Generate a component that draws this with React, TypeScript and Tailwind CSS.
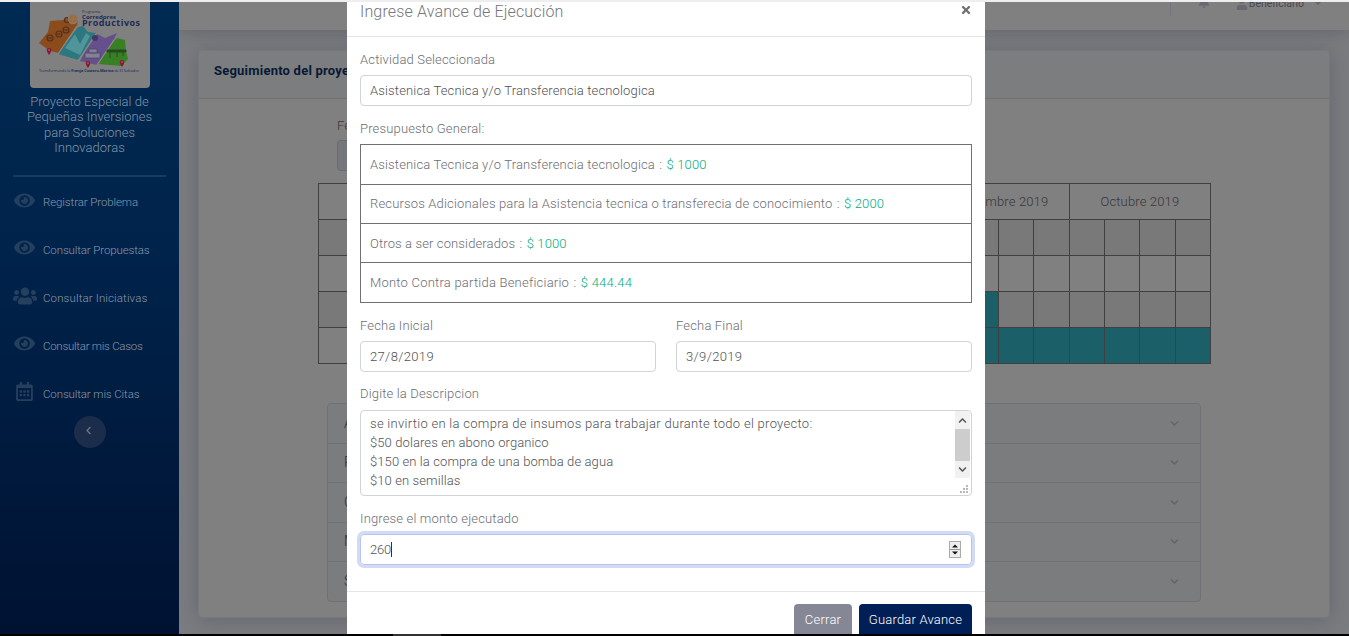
import React from 'react';
import { FaEye, FaUsers, FaRegCalendarAlt, FaBell, FaUser, FaCaretDown, FaChevronDown, FaChevronLeft, FaChevronUp, FaTimes } from 'react-icons/fa';

const menu = [
  { label: 'Registrar Problema', icon: FaEye, track: 'tracking-[-0.1px]' },
  { label: 'Consultar Propuestas', icon: FaEye, track: 'tracking-[-0.12px]' },
  { label: 'Consultar Iniciativas', icon: FaUsers, track: 'tracking-[0.12px]' },
  { label: 'Consultar mis Casos', icon: FaEye, track: 'tracking-[-0.27px]' },
  { label: 'Consultar mis Citas', icon: FaRegCalendarAlt, track: 'tracking-[-0.12px]' },
];

const budget = [
  { label: 'Asistenica Tecnica y/o Transferencia tecnologica', amount: '1000', size: 'h-[40px] tracking-[0.15px]' },
  { label: 'Recursos Adicionales para la Asistencia tecnica o transferecia de conocimiento', amount: '2000', size: 'h-[39px] tracking-[0.165px]' },
  { label: 'Otros a ser considerados', amount: '1000', size: 'h-[39px] pt-px tracking-[0.13px]' },
  { label: 'Monto Contra partida Beneficiario', amount: '444.44', size: 'h-[40px] tracking-[0.22px]' },
];

const months = ['', '', 'Septiembre 2019', 'Octubre 2019'];

const schedule = [
  { shaded: true, from: 16, to: 16 },
  { shaded: false, from: 16, to: 16 },
  { shaded: true, from: 8, to: 10 },
  { shaded: false, from: 8, to: 16 },
];

const panels = [
  'Asistenica Tecnica',
  'Recursos Adicionales',
  'Otros a ser considerados',
  'Monto Contra partida',
  'Seguimiento',
];

function Logo() {
  return (
    <svg className="h-[86px] w-[120px] rounded-b" viewBox="0 0 120 86">
      <rect width="120" height="86" fill="#808080" />
      <path d="M9 41 L18 30 L20 19 L33 18 L42 13 L48 17 L47 24 L29 51 L20 49 Z" fill="#8b4b1b" />
      <path d="M48 25 L53 24 L58 30 L66 31 L48 58 L28 52 Z" fill="#2d7780" />
      <path d="M67 32 L75 36 L87 31 L83 39 L67 63 L50 59 L56 48 Z" fill="#65508b" />
      <path d="M87 36 L95 38 L96 49 L98 57 L91 64 L68 62 L84 39 Z" fill="#398025" />
      <path d="M47 24 L28 52 M66 32 L48 59 M84 38 L67 63" stroke="#898989" strokeWidth="1.3" />
      <path d="M35 46 L45 32 L50 42 L56 31 L60 34 L50 53 Z" fill="#50959a" />
      <path d="M55 51h15v5H55zM59 47h8v4h-8z" fill="#858093" stroke="#4a466c" strokeWidth=".7" />
      <path d="M77 48h19v2H77zM80 50v6M87 50v5M93 50v4" fill="#244d21" stroke="#244d21" />
      <g fill="none" stroke="#54311f" strokeWidth="1.2">
        <circle cx="20" cy="36" r="3" /><circle cx="29" cy="32" r="3" /><circle cx="36" cy="28" r="3" /><circle cx="37" cy="18" r="2.5" />
      </g>
      <path d="M18 36h4M27 32h4M34 28h4" stroke="#54311f" />
      <circle cx="43" cy="17" r="4.5" fill="#a6672f" stroke="#87796c" strokeWidth="1.5" />
      <path d="M43 13v8M39 17h8" stroke="#87796c" />
      <circle cx="65" cy="36" r="3" fill="#483568" />
      <g fill="#8b1830">
        <path d="M19 53c-3-4-3-7 0-7s3 3 0 7M58 66c-3-4-3-7 0-7s3 3 0 7M92 65c-3-4-3-7 0-7s3 3 0 7" />
      </g>
      <g fill="#96858a"><circle cx="19" cy="48" r=".8" /><circle cx="58" cy="61" r=".8" /><circle cx="92" cy="60" r=".8" /></g>
      <g fill="#1d2d58" className="font-['Open_Sans',sans-serif]">
        <text x="52" y="11" fontSize="3.8" textLength="18">Programa</text>
        <text x="52" y="16.5" fontSize="6" fontWeight="700" textLength="34">Corredores</text>
        <text x="52" y="23.7" fontSize="9" fontWeight="700" textLength="58">Productivos</text>
        <text x="9" y="70" fontSize="3.9" textLength="100">Transformando la <tspan fontWeight="700">Franja Costero-Marina</tspan> de El Salvador</text>
      </g>
    </svg>
  );
}

function Sidebar() {
  return (
    <aside className="flex w-[179px] shrink-0 flex-col items-center bg-linear-to-b from-[#002a52] from-0% via-[#00234b] via-40% to-[#001232] to-100%">
      <Logo />
      <div className="mt-[6px] text-center text-[13px] leading-[15.3px] font-light tracking-[0.02px] text-[#8294a6]">
        Proyecto Especial de<br />Pequeñas Inversiones<br />para Soluciones<br />Innovadoras
      </div>
      <div className="mt-5 h-[2px] w-[153px] bg-[#173b61]" />
      <nav className="mt-[2px] flex w-full flex-col pl-[13px]">
        {menu.map(({ label, icon: Icon, track }) => (
          <a key={label} className={`flex h-[47.8px] items-center text-[11.5px] font-light text-[#8b99ab] ${track}`}>
            <span className="flex w-[30px] shrink-0 pb-[6px] text-[#25405f]">
              <Icon size={Icon === FaRegCalendarAlt ? 19 : Icon === FaUsers ? 24 : 21} className={Icon === FaUsers ? '' : Icon === FaEye ? 'ml-[1px]' : 'ml-[2px]'} />
            </span>
            <span className="whitespace-nowrap">{label}</span>
          </a>
        ))}
      </nav>
      <button className="mt-[-2px] flex size-8 items-center justify-center rounded-full bg-[#1b2d4b] pr-[2px] pb-1 text-[#687587]">
        <FaChevronLeft size={9} />
      </button>
    </aside>
  );
}

function Topbar() {
  return (
    <header className="flex h-7 shrink-0 justify-end overflow-hidden bg-[#808080] text-[#686872] shadow-[0_2px_16px_rgba(40,42,50,.28)]">
      <div className="h-[14px] w-px bg-[#74747a]" />
      <FaBell size={12} className="mt-[-6px] ml-[27px]" />
      <FaUser size={12} className="mt-[-4px] mr-px ml-[26px]" />
      <span className="mt-[-5px] h-4 text-[10.5px] leading-[14px] text-[#48484e]">Beneficiario</span>
      <FaCaretDown size={10} className="mt-[-4px] mr-[26px] ml-[9px]" />
    </header>
  );
}

function Schedule() {
  return (
    <div className="ml-[119px] w-[893px] border-t border-l border-[#404040] text-[13px] font-light text-[#36363b]">
      <div className="flex h-9">
        <div className="w-[327px] border-r border-b border-[#404040]" />
        {months.map((m, i) => (
          <div key={i} className="flex flex-1 items-center justify-center border-r border-b border-[#404040] tracking-[0.15px]">{m}</div>
        ))}
      </div>
      {schedule.map((row, i) => (
        <div key={i} className={row.shaded ? 'flex h-9 bg-[#797979]' : 'flex h-9'}>
          <div className="w-[327px] border-r border-b border-[#404040]" />
          {Array.from({ length: 16 }, (_, c) => (
            <div key={c} className={c >= row.from && c < row.to ? 'flex-1 border-r border-b border-[#404040] bg-[#1b6068]' : 'flex-1 border-r border-b border-[#404040]'} />
          ))}
        </div>
      ))}
    </div>
  );
}

function ProjectCard() {
  return (
    <section className="mx-[19px] mt-5 h-[568px] rounded-[4px] border border-[#77787b] bg-[#808080] shadow-[0_2px_20px_rgba(35,38,50,.25)]">
      <div className="flex h-12 items-center rounded-t-[3px] border-b border-[#707174] bg-[#7c7d7f] px-[15px] pb-[8px]">
        <h1 className="text-[13px] font-bold tracking-[0.22px] text-[#071936]">Seguimiento del proyecto</h1>
      </div>
      <div className="h-[84px] pt-[17px] pl-[138px] text-[13px] text-[#36363b]">
        <div className="h-[24px] leading-[19px] font-light">Fecha de inicio</div>
        <div className="h-[31px] w-[300px] rounded border border-[#6b6b72] bg-[#76767d]" />
      </div>
      <Schedule />
      <div className="mt-[39px] ml-[128px] w-[874px] rounded border border-[#707174] bg-[#7b7c7e]">
        {panels.map((p) => (
          <div key={p} className="flex h-[39.5px] items-center justify-between border-b border-[#707174] pr-[21px] pl-[16px] text-[14px] font-light text-[#313137] last:h-[39px] last:border-0">
            <span>{p}</span>
            <FaChevronDown size={9} className="text-[#636469]" />
          </div>
        ))}
      </div>
    </section>
  );
}

function Label({ children }: { children: React.ReactNode }) {
  return <label className="block h-[19px] text-[13px] leading-[19px] font-light tracking-[0.16px] text-[#6c6d74]">{children}</label>;
}

function Box({ children, className = '' }: { children: React.ReactNode; className?: string }) {
  return (
    <div className={`mt-[6px] flex h-[31px] items-center rounded border px-[9px] text-[13px] font-light tracking-[0.15px] text-[#505258] ${className || 'border-[#d1d3da]'}`}>
      {children}
    </div>
  );
}

function Modal() {
  return (
    <div className="absolute top-[2px] left-[347px] flex h-[632px] w-[638px] flex-col overflow-hidden bg-white">
      <header className="flex h-[35px] shrink-0 items-start justify-between border-b border-[#e3e5ea] pr-[13px] pl-[12px]">
        <h2 className="pl-px text-[16px] leading-[20px] font-light tracking-[0.15px] text-[#74767d]">Ingrese Avance de Ejecución</h2>
        <FaTimes size={12} className="mt-[2px] text-[#707070]" />
      </header>
      <div className="h-[554px] shrink-0 px-[13px] pt-[13px]">
        <Label>Actividad Seleccionada</Label>
        <Box>Asistenica Tecnica y/o Transferencia tecnologica</Box>
        <div className="mt-[13px]"><Label>Presupuesto General:</Label></div>
        <div className="mt-[6px] h-[159px] border border-b-0 border-[#717171]">
          {budget.map((b) => (
            <div key={b.label} className={`flex items-center border-b border-[#717171] pl-[9px] text-[13px] font-light whitespace-pre text-[#6c6d74] ${b.size}`}>
              {b.label}<span className="pr-px pl-px"> : </span><span className="text-[#00ab80]">$ {b.amount}</span>
            </div>
          ))}
        </div>
        <div className="mt-[13px] grid grid-cols-2 gap-5">
          <div><Label>Fecha Inicial</Label><Box><span className="tracking-[0.35px]">27/8/2019</span></Box></div>
          <div><Label>Fecha Final</Label><Box><span className="tracking-[0.35px]">3/9/2019</span></Box></div>
        </div>
        <div className="mt-[12px]"><Label>Digite la Descripcion</Label></div>
        <div className="mt-[7px] flex h-[86px] justify-between overflow-hidden rounded border border-[#d1d3da]">
          <div className="pt-[3px] pl-[9px] text-[13px] leading-[19px] font-light tracking-[0.1px] whitespace-nowrap text-[#505258]">
            <span className="tracking-[0.29px]">se invirtio en la compra de insumos para trabajar durante todo el proyecto:</span><br />
            $50 dolares en abono organico<br />
            $150 en la compra de una bomba de agua<br />
            $10 en semillas
          </div>
          <div className="mr-[1px] flex w-[15px] flex-col items-center">
            <div className="flex h-[18px] w-full shrink-0 items-center justify-center bg-[#f1f1f1]"><FaChevronUp size={9} className="text-[#505050]" /></div>
            <div className="h-[32px] w-full shrink-0 bg-[#cdcdcd]" />
            <div className="flex h-[17px] w-full shrink-0 items-center justify-center bg-[#f1f1f1]"><FaChevronDown size={9} className="text-[#505050]" /></div>
            <svg className="mt-[7px] ml-[3px] h-[9px] w-[9px] shrink-0" viewBox="0 0 9 9" fill="#b8b8b8">
              <path d="M6 0h2v2H6zM3 3h2v2H3zM6 3h2v2H6zM0 6h2v2H0zM3 6h2v2H3zM6 6h2v2H6z" />
            </svg>
          </div>
        </div>
        <div className="mt-[13px]"><Label>Ingrese el monto ejecutado</Label></div>
        <Box className="border-[#b8c4ed] shadow-[0_0_0_3px_#d3daf6]">
          <span className="tracking-[-0.2px]">260</span><span className="h-[15px] w-px bg-[#333]" />
          <span className="mr-px ml-auto flex h-[17px] w-[12px] flex-col border border-[#aaa] bg-[#eee]">
            <svg viewBox="0 0 10 15" className="h-[15px] w-[10px]"><path d="M2 5.5 5 2.5 8 5.5zM2 9.5 5 12.5 8 9.5z" fill="#111" /><path d="M0 7.5h10" stroke="#999" /></svg>
          </span>
        </Box>
      </div>
      <footer className="flex min-h-0 flex-1 items-start justify-end gap-[7px] border-t border-[#e3e5ea] pt-[12px] pr-[13px] text-[13px] text-white">
        <button className="h-[31px] w-[58px] shrink-0 rounded-t bg-[#858796] font-light tracking-[0.25px]">Cerrar</button>
        <button className="h-[31px] w-[113px] shrink-0 rounded-t bg-[#001f57] font-light tracking-[0.2px]">Guardar Avance</button>
      </footer>
    </div>
  );
}

export default function App() {
  return (
    <div className="relative flex h-[636px] w-[1349px] flex-col overflow-hidden bg-[#7b7c80] font-[Roboto,sans-serif]">
      <div className="h-[2px] shrink-0 bg-[#eeeeee]" />
      <div className="flex h-[632px] shrink-0">
        <Sidebar />
        <main className="flex min-w-0 flex-1 flex-col overflow-hidden">
          <Topbar />
          <ProjectCard />
        </main>
      </div>
      <div className="flex h-[2px] shrink-0 bg-black pl-[393px]"><div className="w-[48px] bg-[#333]" /></div>
      <Modal />
    </div>
  );
}
